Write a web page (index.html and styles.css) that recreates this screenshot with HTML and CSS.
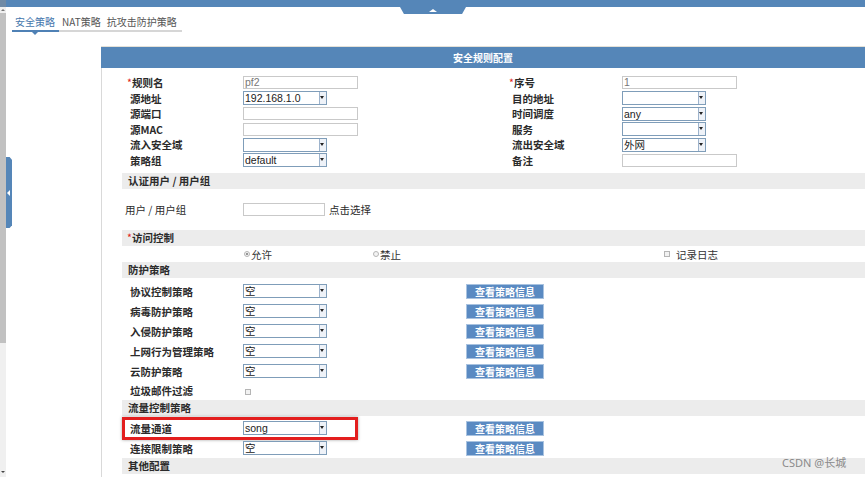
FILE: index.html
```html
<!DOCTYPE html>
<html lang="zh-CN">
<head>
<meta charset="utf-8">
<title>安全规则配置</title>
<link rel="stylesheet" href="styles.css">
</head>
<body>
<div class="topbar"><div class="toptab"></div></div>
<div class="frame">
  <div class="scroll"><div class="sc-up"></div><div class="sc-thumb"></div><div class="sc-track"></div><div class="sc-down"></div></div>
  <div class="collapse"></div>
  <div class="main">
    <div class="tabs">
      <div class="tab on">安全策略</div>
      <div class="tab">NAT策略</div>
      <div class="tab">抗攻击防护策略</div>
    </div>
    <div class="panel">
      <div class="phead">安全规则配置</div>
      <div class="pbody">
        <div class="cfg">
          <div class="lbl"><i class="req">*</i>规则名</div>
          <div><span class="txt">pf2</span></div>
          <div class="lbl"><i class="req">*</i>序号</div>
          <div><span class="txt">1</span></div>

          <div class="lbl">源地址</div>
          <div><span class="sel"><span class="val">192.168.1.0</span><span class="arr"></span></span></div>
          <div class="lbl">目的地址</div>
          <div><span class="sel"><span class="val"></span><span class="arr"></span></span></div>

          <div class="lbl">源端口</div>
          <div><span class="txt"></span></div>
          <div class="lbl">时间调度</div>
          <div><span class="sel"><span class="val">any</span><span class="arr"></span></span></div>

          <div class="lbl">源MAC</div>
          <div><span class="txt"></span></div>
          <div class="lbl">服务</div>
          <div><span class="sel"><span class="val"></span><span class="arr"></span></span></div>

          <div class="lbl">流入安全域</div>
          <div><span class="sel"><span class="val"></span><span class="arr"></span></span></div>
          <div class="lbl">流出安全域</div>
          <div><span class="sel"><span class="val">外网</span><span class="arr"></span></span></div>

          <div class="lbl">策略组</div>
          <div><span class="sel"><span class="val">default</span><span class="arr"></span></span></div>
          <div class="lbl">备注</div>
          <div><span class="txt"></span></div>
        </div>

        <div class="sec s-auth">认证用户 / 用户组</div>
        <div class="row r-user">
          <div class="lbl plain">用户 / 用户组</div>
          <div class="pick"><span class="txt short"></span><span class="hint">点击选择</span></div>
        </div>

        <div class="sec s-acc"><i class="req">*</i>访问控制</div>
        <div class="row r-radio">
          <div></div>
          <div class="opt w1"><span class="radio on"></span>允许</div>
          <div class="opt w2"><span class="radio"></span>禁止</div>
          <div class="opt"><span class="check"></span><span class="cl">记录日志</span></div>
        </div>

        <div class="sec">防护策略</div>
        <div class="row first">
          <div class="lbl">协议控制策略</div>
          <div><span class="sel"><span class="val">空</span><span class="arr"></span></span></div>
          <div><span class="btn">查看策略信息</span></div>
        </div>
        <div class="row">
          <div class="lbl">病毒防护策略</div>
          <div><span class="sel"><span class="val">空</span><span class="arr"></span></span></div>
          <div><span class="btn">查看策略信息</span></div>
        </div>
        <div class="row">
          <div class="lbl">入侵防护策略</div>
          <div><span class="sel"><span class="val">空</span><span class="arr"></span></span></div>
          <div><span class="btn">查看策略信息</span></div>
        </div>
        <div class="row">
          <div class="lbl">上网行为管理策略</div>
          <div><span class="sel"><span class="val">空</span><span class="arr"></span></span></div>
          <div><span class="btn">查看策略信息</span></div>
        </div>
        <div class="row">
          <div class="lbl">云防护策略</div>
          <div><span class="sel"><span class="val">空</span><span class="arr"></span></span></div>
          <div><span class="btn">查看策略信息</span></div>
        </div>
        <div class="row r-spam">
          <div class="lbl">垃圾邮件过滤</div>
          <div><span class="check"></span></div>
        </div>

        <div class="sec s-flow">流量控制策略</div>
        <div class="row r-flow">
          <div class="lbl">流量通道</div>
          <div><span class="sel"><span class="val">song</span><span class="arr"></span></span></div>
          <div><span class="btn">查看策略信息</span></div>
          <div class="mark"></div>
        </div>
        <div class="row">
          <div class="lbl">连接限制策略</div>
          <div><span class="sel"><span class="val">空</span><span class="arr"></span></span></div>
          <div><span class="btn">查看策略信息</span></div>
        </div>
        <div class="sec">其他配置</div>
      </div>
    </div>
  </div>
</div>
<div class="watermark">CSDN @长城</div>
</body>
</html>
```

FILE: styles.css
```css
* { box-sizing: border-box; }
body {
  margin: 0;
  width: 865px;
  height: 477px;
  overflow: hidden;
  position: relative;
  background: #fff;
  color: #2b2b2b;
  font-family: "Noto Sans CJK SC", "Noto Sans", sans-serif;
  font-size: 10.5px;
}
i { font-style: normal; }

.topbar { height: 7px; background: #5586b8; position: relative; }
.topbar::before { content: ""; position: absolute; left: 0; top: 0; width: 6px; height: 7px; background: #6f8aa6; }
.toptab {
  position: absolute; left: 400px; top: 7px; width: 66px; height: 7px;
  background: #5586b8;
  clip-path: polygon(0 0, 100% 0, 94% 100%, 6% 100%);
}
.toptab::after {
  content: ""; position: absolute; left: 29px; top: 2px;
  border-bottom: 3px solid #fff; border-left: 4px solid transparent; border-right: 4px solid transparent;
}

.frame { display: flex; height: 470px; }
.scroll { width: 6px; background: #f0f0f0; display: flex; flex-direction: column; }
.sc-up { height: 6px; position: relative; }
.sc-up::after { content: ""; position: absolute; left: 1px; top: 2px; border-bottom: 2px solid #777; border-left: 2px solid transparent; border-right: 2px solid transparent; }
.sc-thumb { height: 330px; background: #c1c1c1; }
.sc-track { flex: 1; }
.sc-down { height: 8px; position: relative; }
.sc-down::after { content: ""; position: absolute; left: 1px; top: 2px; border-top: 2px solid #444; border-left: 2px solid transparent; border-right: 2px solid transparent; }

.collapse {
  position: absolute; left: 6px; top: 157px; width: 6px; height: 71px;
  background: #5586b8;
  clip-path: polygon(0 0, 60% 0, 100% 4%, 100% 96%, 60% 100%, 0 100%);
}
.collapse::after {
  content: ""; position: absolute; left: 1px; top: 33px;
  border-right: 3px solid #fff; border-top: 3px solid transparent; border-bottom: 3px solid transparent;
}

.main { flex: 1; padding-left: 6px; }

.tabs { display: flex; margin-top: 8px; width: 170px; border-bottom: 2px solid #d6d6d6; }
.tab { padding: 0 3px 1px; line-height: 14px; font-size: 10px; color: #555; white-space: nowrap; }
.tab.on { color: #4677ad; border-bottom: 2px solid #4f81b5; margin-bottom: -2px; position: relative; padding-right: 4px; }
.tab.on::after {
  content: ""; position: absolute; left: 20px; bottom: -5px;
  border-top: 3px solid #4f81b5; border-left: 3px solid transparent; border-right: 3px solid transparent;
}

.panel { margin-top: 15px; margin-left: 89px; }
.phead {
  height: 21px; line-height: 21px; background: #5586b8; color: #fff;
  text-align: center; font-weight: bold; font-size: 10px;
  box-shadow: 0 -1px 0 #e4e1d8;
}
.pbody { border-left: 1px solid #d9d9d9; padding: 7px 0 0 20px; height: 410px; }

.cfg {
  display: grid;
  grid-template-columns: 113px 269px 110px 1fr;
  grid-auto-rows: 15.5px;
  align-items: center;
  padding-left: 8px;
}
.lbl { font-weight: bold; white-space: nowrap; }
.lbl.plain { font-weight: normal; margin-left: -5px; }
.req { color: #e02020; font-weight: normal; margin-left: -3px; }

.txt {
  display: block; width: 115px; height: 13px;
  border: 1px solid #c9c9c9; background: #fff;
  font-family: "Liberation Sans", "Noto Sans CJK SC", sans-serif;
  font-size: 10.5px; line-height: 11px; color: #777; padding-left: 1px;
}
.txt.short { width: 82px; display: inline-block; vertical-align: middle; }

.sel {
  display: flex; width: 84px; height: 14px;
  border: 1px solid #7f9db9; background: #fff;
}
.val {
  flex: 1; padding-left: 1px; overflow: hidden; white-space: nowrap;
  font-family: "Liberation Sans", "Noto Sans CJK SC", sans-serif;
  font-size: 10.5px; line-height: 12px; color: #222;
}
.arr { width: 7px; border-left: 1px solid #9db3cc; background: #eef2f8; position: relative; }
.arr::after {
  content: ""; position: absolute; left: 0; top: 4px;
  border-top: 3px solid #222; border-left: 2.5px solid transparent; border-right: 2.5px solid transparent;
}

.sec {
  height: 16px; line-height: 16px; background: #ececec;
  padding-left: 6px; font-weight: bold;
}
.s-auth { margin-top: 5px; }
.s-acc { margin-top: 1px; padding-left: 8px; }
.s-flow { margin-top: 1px; }

.row {
  display: grid; grid-template-columns: 113px 223px 78px;
  align-items: center; padding-left: 8px; height: 20px; position: relative;
}
.row.first { margin-top: 3px; }
.r-user { height: 40px; grid-template-columns: 113px 1fr; }
.pick { display: flex; align-items: center; }
.hint { margin-left: 4px; }
.r-radio { height: 16px; display: flex; }
.r-radio > div:first-child { width: 113px; }
.opt { display: flex; align-items: center; color: #333; }
.opt.w1 { width: 129px; }
.opt.w2 { width: 290px; }
.radio {
  width: 6px; height: 6px; border-radius: 50%;
  border: 1px solid #b5b5b5; background: #f4f4f4; margin: 0 1px 0 1px; position: relative;
}
.radio.on::after { content: ""; position: absolute; left: 1px; top: 1px; width: 2px; height: 2px; border-radius: 50%; background: #777; }
.check { display: inline-block; width: 6px; height: 6px; border: 1px solid #b5b5b5; background: #f2f2f2; margin-left: 2px; }
.cl { margin-left: 6px; }
.r-spam { height: 18px; }

.btn {
  display: block; width: 78px; height: 15px; line-height: 13px;
  background: #5a8ac2; border: 1px solid #a9c3e0;
  color: #fff; font-weight: bold; font-size: 10px; text-align: center;
}
.r-flow { margin-top: 2px; }
.mark {
  position: absolute; left: 0; top: -1px; width: 236px; height: 23px;
  border: 3px solid #e31e1e; box-shadow: 0 0 3px rgba(0,0,0,0.35);
}

.watermark {
  position: absolute; left: 782px; top: 454px;
  font-family: "Noto Sans", "Noto Sans CJK SC", sans-serif;
  font-size: 11px; color: #8a8a8a;
}
```
